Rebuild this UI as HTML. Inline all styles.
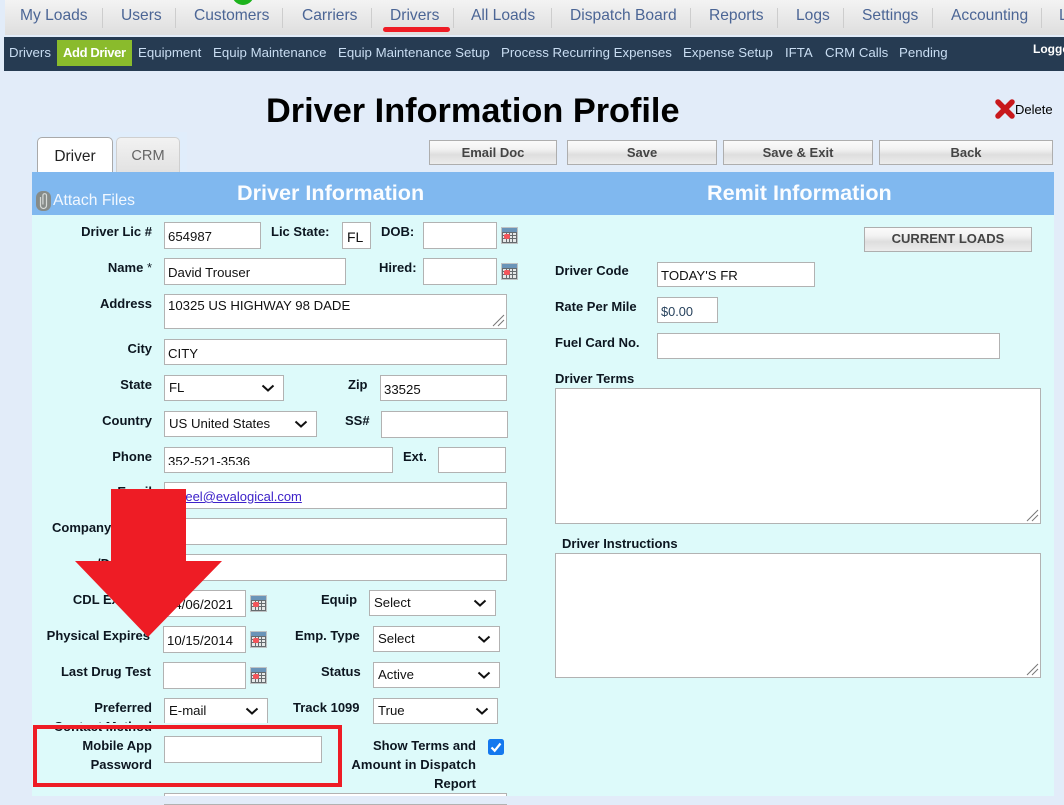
<!DOCTYPE html>
<html><head><meta charset="utf-8"><title>Driver Information Profile</title>
<style>
html,body{margin:0;padding:0}
body{width:1064px;height:804px;position:relative;overflow:hidden;background:#e2ecf9;font-family:"Liberation Sans",Arial,sans-serif;color:#000}
.a,.n,.s,.l,.i,.t,.sel,.b,.sep,.cal{position:absolute}
.n{top:7px;font-size:15.6px;line-height:18px;color:#4b6595;white-space:nowrap}
.sep{top:8px;width:1px;height:20px;background:#cdcdcd}
.s{top:45px;font-size:13.25px;line-height:16px;color:#c9ddf2;white-space:nowrap}
.l{font-size:13px;font-weight:bold;line-height:15px;color:#0c1620;white-space:nowrap}
.r{left:0;text-align:right}
.i,.t,.sel{box-sizing:border-box;background:#fff;border:1px solid #b2b2b2;font-size:13.2px;color:#111;overflow:hidden;white-space:nowrap}
.i{padding:0 3px;height:27px;line-height:28px}
.sel{height:26px;line-height:24px;padding-left:4px}
.sel svg{position:absolute;right:8px;top:8px}
.t svg{position:absolute;right:1px;bottom:1px}
.b{box-sizing:border-box;height:25px;border:1px solid #aeaeae;background:linear-gradient(#fbfbfb 0,#f2f2f2 35%,#dedede 60%,#ececec 100%);font-size:13px;font-weight:bold;color:#444;text-align:center;line-height:23px;white-space:nowrap}
.cal{width:17px;height:17px}
</style></head><body>

<!-- top nav -->
<div class="a" style="left:5px;top:0;width:1059px;height:35px;background:linear-gradient(#f3f3f3,#dedede)"></div>
<div class="a" style="left:232px;top:-17px;width:22px;height:22px;border-radius:50%;background:#1db31d"></div>
<div class="n" style="left:20px">My Loads</div><div class="sep" style="left:102px"></div>
<div class="n" style="left:121px">Users</div><div class="sep" style="left:175px"></div>
<div class="n" style="left:194px">Customers</div><div class="sep" style="left:282px"></div>
<div class="n" style="left:302px">Carriers</div><div class="sep" style="left:371px"></div>
<div class="n" style="left:390px">Drivers</div><div class="sep" style="left:453px"></div>
<div class="n" style="left:471px">All Loads</div><div class="sep" style="left:551px"></div>
<div class="n" style="left:570px">Dispatch Board</div><div class="sep" style="left:690px"></div>
<div class="n" style="left:709px">Reports</div><div class="sep" style="left:777px"></div>
<div class="n" style="left:796px">Logs</div><div class="sep" style="left:843px"></div>
<div class="n" style="left:862px">Settings</div><div class="sep" style="left:932px"></div>
<div class="n" style="left:951px">Accounting</div><div class="sep" style="left:1041px"></div>
<div class="n" style="left:1059px">L</div>
<div class="a" style="left:383px;top:27px;width:67px;height:5px;border-radius:3px;background:#ee1c25"></div>

<!-- sub nav -->
<div class="a" style="left:4px;top:37px;width:1060px;height:34px;background:#263b52"></div>
<div class="a" style="left:57px;top:40px;width:75px;height:26px;background:#8abb2c"></div>
<div class="s" style="left:9px">Drivers</div>
<div class="s" style="left:63px;color:#fff;font-weight:bold;font-size:13px;letter-spacing:-.38px">Add Driver</div>
<div class="s" style="left:138px">Equipment</div>
<div class="s" style="left:213px">Equip Maintenance</div>
<div class="s" style="left:338px">Equip Maintenance Setup</div>
<div class="s" style="left:501px">Process Recurring Expenses</div>
<div class="s" style="left:683px">Expense Setup</div>
<div class="s" style="left:785px">IFTA</div>
<div class="s" style="left:825px">CRM Calls</div>
<div class="s" style="left:899px">Pending</div>
<div class="s" style="left:1033px;top:41px;color:#fff;font-weight:bold;font-size:12px">Logged</div>

<!-- title -->
<div class="a" style="left:266px;top:91px;font-size:34.3px;font-weight:bold;line-height:40px;white-space:nowrap">Driver Information Profile</div>
<svg class="a" style="left:994px;top:99px" width="22" height="21" viewBox="0 0 22 21"><path d="M4 3 L18 17 M18 3 L4 17" stroke="#c8181c" stroke-width="5.5" stroke-linecap="round"/></svg>
<div class="a" style="left:1015px;top:102px;font-size:13px;line-height:15px">Delete</div>

<!-- tabs -->
<div class="a" style="left:32px;top:132px;width:155px;height:40px;background:#e0edfb"></div>
<div class="a" style="box-sizing:border-box;left:37px;top:137px;width:76px;height:36px;background:#fff;border:1px solid #a9a9a9;border-bottom:0;border-radius:5px 5px 0 0;font-size:15.5px;line-height:37px;text-align:center;color:#222">Driver</div>
<div class="a" style="box-sizing:border-box;left:116px;top:137px;width:64px;height:35px;background:linear-gradient(#f2f2f2,#e2e2e2);border:1px solid #cfcfcf;border-bottom:0;border-radius:5px 5px 0 0;font-size:14.6px;line-height:37px;text-align:center;color:#666">CRM</div>

<!-- buttons -->
<div class="b" style="left:429px;top:140px;width:128px">Email Doc</div>
<div class="b" style="left:567px;top:140px;width:150px">Save</div>
<div class="b" style="left:723px;top:140px;width:150px">Save &amp; Exit</div>
<div class="b" style="left:879px;top:140px;width:174px">Back</div>

<!-- panel -->
<div class="a" style="left:32px;top:172px;width:1022px;height:43px;background:#80b8ef"></div>
<div class="a" style="left:32px;top:215px;width:1022px;height:581px;background:#ddfafa"></div>
<svg class="a" style="left:36px;top:191px" width="15" height="20" viewBox="0 0 15 20"><rect x="0" y="0" width="15" height="20" rx="6.5" fill="#868b88"/><path d="M4.5 6 V14.5 a3 3 0 0 0 6 0 V4.5 a1.8 1.8 0 0 0 -3.6 0 V13.5" fill="none" stroke="#d6dad7" stroke-width="1.2"/></svg>
<div class="a" style="left:53px;top:192px;font-size:15.7px;line-height:18px;color:#f2f8ff;white-space:nowrap">Attach Files</div>
<div class="a" style="left:237px;top:180px;font-size:21.6px;font-weight:bold;line-height:25px;color:#fbfdff;white-space:nowrap">Driver Information</div>
<div class="a" style="left:707px;top:180px;font-size:21.6px;font-weight:bold;line-height:25px;color:#fbfdff;white-space:nowrap">Remit Information</div>
<div class="b" style="left:864px;top:227px;width:168px;line-height:21px">CURRENT LOADS</div>

<!-- left form -->
<div class="l r" style="top:224px;width:152px">Driver Lic #</div>
<div class="i" style="left:164px;top:222px;width:97px">654987</div>
<div class="l" style="left:271px;top:224px">Lic State:</div>
<div class="i" style="left:342px;top:222px;width:29px;padding-left:4px;font-size:14px">FL</div>
<div class="l" style="left:381px;top:224px">DOB:</div>
<div class="i" style="left:423px;top:222px;width:74px"></div>
<svg class="cal" style="left:501px;top:227px" viewBox="0 0 17 17"><use href="#c"/></svg>

<div class="l r" style="top:260px;width:152px">Name <span style="font-weight:normal">*</span></div>
<div class="i" style="left:164px;top:258px;width:182px">David Trouser</div>
<div class="l" style="left:379px;top:260px">Hired:</div>
<div class="i" style="left:423px;top:258px;width:74px"></div>
<svg class="cal" style="left:501px;top:263px" viewBox="0 0 17 17"><use href="#c"/></svg>

<div class="l r" style="top:296px;width:152px">Address</div>
<div class="t" style="left:164px;top:294px;width:343px;height:35px;padding:2px 3px;line-height:17px">10325 US HIGHWAY 98 DADE<svg width="14" height="14" viewBox="0 0 14 14"><path d="M2 13 L13 2 M7 13 L13 7" stroke="#777" stroke-width="1" fill="none"/></svg></div>

<div class="l r" style="top:341px;width:152px">City</div>
<div class="i" style="left:164px;top:339px;width:343px;height:26px">CITY</div>

<div class="l r" style="top:377px;width:152px">State</div>
<div class="sel" style="left:164px;top:375px;width:120px">FL<svg width="14" height="8" viewBox="0 0 14 8"><path d="M1.5 1.5 L7 6.5 L12.5 1.5" fill="none" stroke="#111" stroke-width="2"/></svg></div>
<div class="l" style="left:348px;top:377px">Zip</div>
<div class="i" style="left:380px;top:375px;width:127px;height:26px">33525</div>

<div class="l r" style="top:413px;width:152px">Country</div>
<div class="sel" style="left:164px;top:411px;width:153px">US United States<svg width="14" height="8" viewBox="0 0 14 8"><path d="M1.5 1.5 L7 6.5 L12.5 1.5" fill="none" stroke="#111" stroke-width="2"/></svg></div>
<div class="l" style="left:345px;top:413px">SS#</div>
<div class="i" style="left:381px;top:411px;width:127px"></div>

<div class="l r" style="top:449px;width:152px">Phone</div>
<div class="i" style="left:164px;top:447px;width:229px;height:26px;line-height:25px"><div style="height:17px;overflow:hidden;margin-top:0;line-height:28px">352-521-3536</div></div>
<div class="l" style="left:403px;top:449px">Ext.</div>
<div class="i" style="left:438px;top:447px;width:68px;height:26px"></div>

<div class="l r" style="top:484px;width:152px">Email</div>
<div class="i" style="left:164px;top:482px;width:343px;color:#3d22c9;text-decoration:underline;font-size:13px">dsteel@evalogical.com</div>

<div class="l" style="left:52px;top:520px">Company</div>
<div class="i" style="left:164px;top:518px;width:343px"></div>

<div class="l" style="left:97px;top:556px">/D</div>
<div class="i" style="left:164px;top:554px;width:343px"></div>

<div class="l r" style="top:592px;width:150px">CDL Expires</div>
<div class="i" style="left:163px;top:590px;width:83px">04/06/2021</div>
<svg class="cal" style="left:250px;top:595px" viewBox="0 0 17 17"><use href="#c"/></svg>
<div class="l" style="left:321px;top:592px">Equip</div>
<div class="sel" style="left:369px;top:590px;width:127px">Select<svg width="14" height="8" viewBox="0 0 14 8"><path d="M1.5 1.5 L7 6.5 L12.5 1.5" fill="none" stroke="#111" stroke-width="2"/></svg></div>

<div class="l r" style="top:628px;width:150px">Physical Expires</div>
<div class="i" style="left:163px;top:626px;width:83px">10/15/2014</div>
<svg class="cal" style="left:250px;top:631px" viewBox="0 0 17 17"><use href="#c"/></svg>
<div class="l" style="left:295px;top:628px">Emp. Type</div>
<div class="sel" style="left:373px;top:626px;width:127px">Select<svg width="14" height="8" viewBox="0 0 14 8"><path d="M1.5 1.5 L7 6.5 L12.5 1.5" fill="none" stroke="#111" stroke-width="2"/></svg></div>

<div class="l r" style="top:664px;width:151px">Last Drug Test</div>
<div class="i" style="left:163px;top:662px;width:83px"></div>
<svg class="cal" style="left:250px;top:667px" viewBox="0 0 17 17"><use href="#c"/></svg>
<div class="l" style="left:321px;top:664px">Status</div>
<div class="sel" style="left:373px;top:662px;width:127px">Active<svg width="14" height="8" viewBox="0 0 14 8"><path d="M1.5 1.5 L7 6.5 L12.5 1.5" fill="none" stroke="#111" stroke-width="2"/></svg></div>

<div class="l r" style="top:700px;width:152px">Preferred</div>
<div class="l r" style="top:719px;width:152px">Contact Method</div>
<div class="sel" style="left:164px;top:698px;width:104px">E-mail<svg width="14" height="8" viewBox="0 0 14 8"><path d="M1.5 1.5 L7 6.5 L12.5 1.5" fill="none" stroke="#111" stroke-width="2"/></svg></div>
<div class="l" style="left:293px;top:700px">Track 1099</div>
<div class="sel" style="left:373px;top:698px;width:125px">True<svg width="14" height="8" viewBox="0 0 14 8"><path d="M1.5 1.5 L7 6.5 L12.5 1.5" fill="none" stroke="#111" stroke-width="2"/></svg></div>

<div class="a" style="left:36px;top:723px;width:303px;height:4px;background:#ddfafa"></div>
<div class="l r" style="top:738px;width:152px">Mobile App</div>
<div class="l r" style="top:757px;width:152px">Password</div>
<div class="i" style="left:164px;top:736px;width:158px"></div>
<div class="l r" style="top:738px;width:476px">Show Terms and</div>
<div class="l r" style="top:757px;width:476px;letter-spacing:.1px">Amount in Dispatch</div>
<div class="l r" style="top:776px;width:476px">Report</div>
<svg class="a" style="left:488px;top:739px" width="16" height="16" viewBox="0 0 16 16"><rect width="16" height="16" rx="2.5" fill="#1478ee"/><path d="M3.5 8.5 L6.7 11.7 L12.5 4.5" fill="none" stroke="#fff" stroke-width="2.2"/></svg>
<div class="i" style="left:164px;top:793px;width:343px;height:12px"></div>
<div class="a" style="left:0;top:796px;width:1064px;height:8px;background:#e2ecf9"></div>

<!-- right form -->
<div class="l" style="left:555px;top:263px">Driver Code</div>
<div class="i" style="left:657px;top:262px;width:158px;height:25px;line-height:26px">TODAY'S FR</div>
<div class="l" style="left:555px;top:299px">Rate Per Mile</div>
<div class="i" style="left:657px;top:297px;width:61px;height:26px;font-size:12.8px;color:#26415c">$0.00</div>
<div class="l" style="left:555px;top:335px">Fuel Card No.</div>
<div class="i" style="left:657px;top:333px;width:343px;height:26px"></div>
<div class="l" style="left:555px;top:371px">Driver Terms</div>
<div class="t" style="left:555px;top:388px;width:486px;height:136px"><svg width="14" height="14" viewBox="0 0 14 14"><path d="M2 13 L13 2 M7 13 L13 7" stroke="#777" stroke-width="1" fill="none"/></svg></div>
<div class="l" style="left:562px;top:536px">Driver Instructions</div>
<div class="t" style="left:555px;top:553px;width:486px;height:125px"><svg width="14" height="14" viewBox="0 0 14 14"><path d="M2 13 L13 2 M7 13 L13 7" stroke="#777" stroke-width="1" fill="none"/></svg></div>

<!-- annotations -->
<svg class="a" style="left:0;top:0;pointer-events:none" width="1064" height="804" viewBox="0 0 1064 804">
<path d="M111 489 H186 V561 H222 L148 637 L75 561 H111 Z" fill="#ee1c25"/>
<rect x="35" y="727" width="305" height="58" fill="none" stroke="#ee1c25" stroke-width="4"/>
</svg>

<svg width="0" height="0" style="position:absolute"><defs>
<g id="c"><rect x="0" y="0" width="17" height="17" fill="#bfc3c4"/><rect x="1" y="1" width="15" height="4" fill="#6a94b8"/><rect x="1" y="5" width="15" height="11" fill="#666b6e"/>
<path d="M2 6h3v2h-3zM6 6h2v2h-2zM9 6h2v2h-2zM12 6h3v2h-3zM2 9h3v2h-3zM6 9h2v2h-2zM9 9h2v2h-2zM12 9h3v2h-3zM2 12h3v3h-3zM6 12h2v3h-2zM9 12h2v3h-2zM12 12h3v3h-3z" fill="#e6e8e8"/>
<rect x="3" y="7" width="6" height="5" rx="2" fill="#f4555a"/></g>
</defs></svg>
</body></html>
